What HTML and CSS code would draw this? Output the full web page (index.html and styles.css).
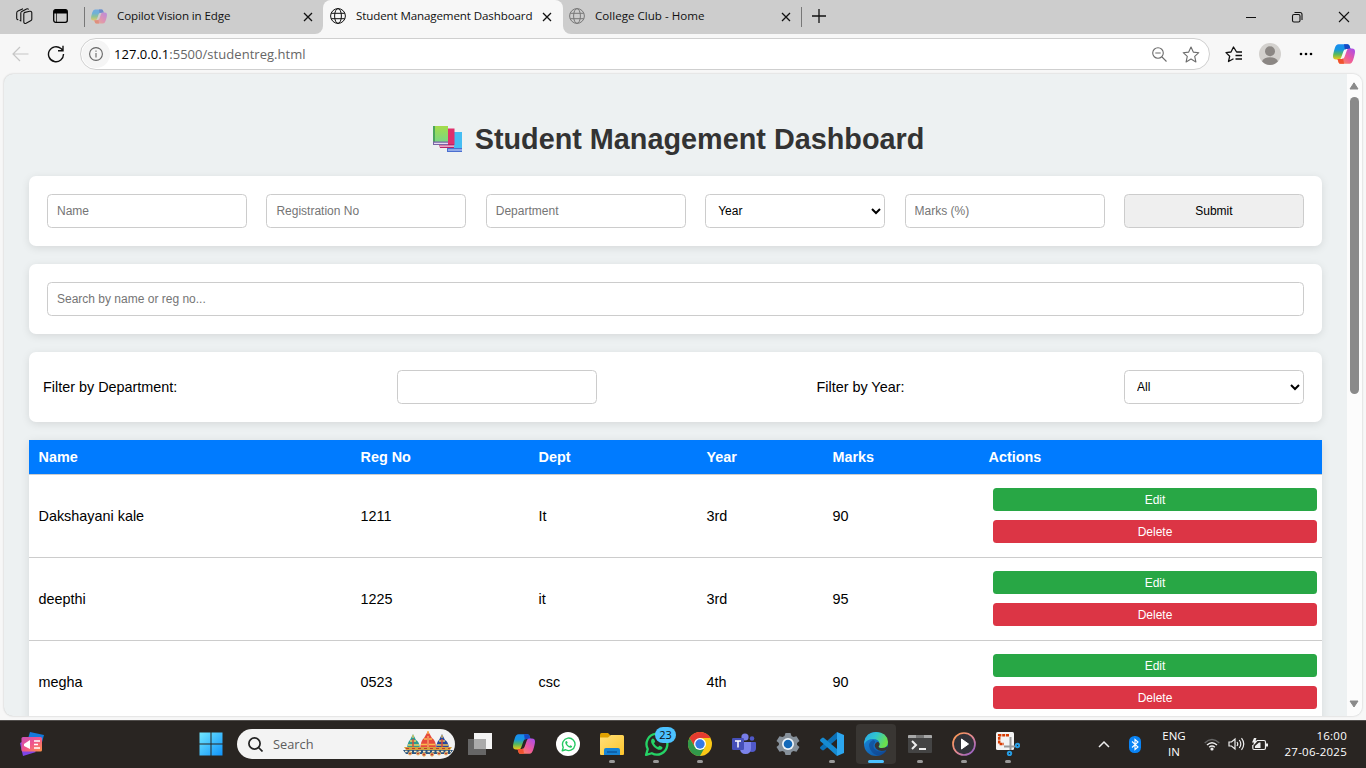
FILE: index.html
```html
<!DOCTYPE html>
<html lang="en">
<head>
<meta charset="utf-8">
<title>Student Management Dashboard</title>
<link rel="stylesheet" href="styles.css">
</head>
<body>
<svg class="defs" width="0" height="0" aria-hidden="true">
  <defs>
    <linearGradient id="cpA" x1="0" y1="0" x2="0" y2="1"><stop offset="0" stop-color="#1b8df2"/><stop offset=".35" stop-color="#1597e0"/><stop offset=".65" stop-color="#57b95b"/><stop offset="1" stop-color="#f4c916"/></linearGradient>
    <linearGradient id="cpB" x1="1" y1="0" x2="0" y2="1"><stop offset="0" stop-color="#a44bf0"/><stop offset=".5" stop-color="#ee5a9c"/><stop offset="1" stop-color="#ff9a4a"/></linearGradient>
    <linearGradient id="win" x1="0" y1="0" x2="1" y2="1"><stop offset="0" stop-color="#72e8ff"/><stop offset="1" stop-color="#0f93fb"/></linearGradient>
    <linearGradient id="fold" x1="0" y1="0" x2="1" y2="1"><stop offset="0" stop-color="#ffe07a"/><stop offset="1" stop-color="#fdc52c"/></linearGradient>
    <linearGradient id="edA" x1="0" y1="0" x2="1" y2=".4"><stop offset="0" stop-color="#2ba5e8"/><stop offset=".5" stop-color="#30c5d0"/><stop offset="1" stop-color="#6be04c"/></linearGradient>
    <linearGradient id="edB" x1="0" y1="0" x2="1" y2="1"><stop offset="0" stop-color="#1a8de0"/><stop offset="1" stop-color="#0c4d9c"/></linearGradient>
    <linearGradient id="ring" x1="0" y1="0" x2="1" y2="1"><stop offset="0" stop-color="#ff9a4a"/><stop offset=".5" stop-color="#e58a90"/><stop offset="1" stop-color="#8858d0"/></linearGradient>
    <linearGradient id="book" x1="0" y1="0" x2="0" y2="1"><stop offset="0" stop-color="#a4dc4a"/><stop offset="1" stop-color="#74d58b"/></linearGradient>
    <linearGradient id="news" x1="0" y1="0" x2="1" y2="1"><stop offset="0" stop-color="#c850b8"/><stop offset=".5" stop-color="#f0568a"/><stop offset="1" stop-color="#ff9348"/></linearGradient>
    <symbol id="copilot" viewBox="0 0 22 20">
      <path d="M5.500.3h9q1.500 0 2 1.500l1 3.200h-4.300q-2 0-2.700 2L8.200 13.500q-.7 2-2.200 2H3q-3 0-3-3Q0 10 1.700 4.500 3 .3 5.500.3z" fill="url(#cpA)"/>
      <path d="M11 .3h3.500q1.500 0 2 1.500l1 3.200h-4.300q-.8 0-1.400.4z" fill="#1749c4"/>
      <path d="M16.500 19.700h-9q-1.500 0-2-1.500l-1-3.200h4.300q2 0 2.700-2L13.800 6.500q.7-2 2.200-2h3q3 0 3 3 0 2.500-1.700 8-1.300 4.200-3.800 4.200z" fill="url(#cpB)"/>
      <path d="M4.500 15h4.300q.8 0 1.400-.4l.8 5.100H7.500q-1.500 0-2-1.500z" fill="#f0522f"/>
    </symbol>
    <symbol id="globe" viewBox="0 0 16 16"><g fill="none" stroke="currentColor"><circle cx="8" cy="8" r="7.400"/><ellipse cx="8" cy="8" rx="3.400" ry="7.400"/><path d="M1.200 5.300h13.600M1.200 10.700h13.600"/></g></symbol>
    <symbol id="close" viewBox="0 0 10 10"><path d="M1 1l8 8M9 1L1 9" stroke="currentColor" stroke-width="1.300" fill="none"/></symbol>
    <symbol id="whats" viewBox="0 0 24 24"><path d="M2 22l1.600-5.600A10 10 0 1 1 7.500 20.400z" fill="none" stroke="currentColor" stroke-width="2.200" stroke-linejoin="round"/><path d="M8.500 6.300c-.6 0-1.700.9-1.700 2.500 0 3.400 4.900 8.300 8.300 8.300 1.600 0 2.700-1.200 2.700-2.100 0-.5-2.500-1.900-3-1.700-.5.300-1 1.300-1.400 1.200-1.300-.4-3.400-2.500-3.800-3.700 0-.4 1.100-1 1.100-1.500 0-.5-1-3-2.200-3z" fill="currentColor"/></symbol>
  </defs>
</svg>

<header class="tabstrip">
  <div class="tabs-left">
    <svg class="ic-work" viewBox="0 0 17 16" width="17" height="16" fill="none" stroke="#111" stroke-width="1.100"><path d="M8 4.600l5.700-1.300q1.800-.4 2.100 1.400v6.600q0 1-1.200 1.400l-4.500 2.600q-2 .6-2.300-1.200V6q0-1.100.9-1.500zM4.800 12.700V5q0-1 1-1.600L10.500.9q1.500-.6 2.100.7M5.300 13q-1.200.2-1.400-1M7 .7L2 3Q.7 3.600.7 5v5q0 2 1.600 1.500"/></svg>
    <svg class="ic-vert" viewBox="0 0 15 14" width="15" height="14"><rect x=".7" y=".7" width="13.600" height="12.600" rx="2" fill="none" stroke="#000" stroke-width="1.300"/><path d="M1 4.500V2q0-1.500 1.500-1.500h10Q14 .5 14 2v2.500z"/><path d="M3.500 4v9" stroke="#000" stroke-width=".7"/></svg>
    <i class="sep"></i>
    <svg class="fav faded" width="16" height="15"><use href="#copilot"/></svg>
    <span class="tab-title t1">Copilot Vision in Edge</span>
    <svg class="x" width="10" height="10"><use href="#close"/></svg>
  </div>
  <div class="tab-slot"><div class="tab-active">
    <svg class="fav" width="16" height="16"><use href="#globe"/></svg>
    <span class="tab-title t2">Student Management Dashboard</span>
    <svg class="x" width="10" height="10"><use href="#close"/></svg>
  </div></div>
  <div class="tabs-right">
    <svg class="fav dim" width="16" height="16"><use href="#globe"/></svg>
    <span class="tab-title t3">College Club - Home</span>
    <svg class="x" width="10" height="10"><use href="#close"/></svg>
    <i class="sep"></i>
    <svg class="plus" width="14" height="14" viewBox="0 0 14 14"><path d="M7 0v14M0 7h14" stroke="#111" stroke-width="1.300"/></svg>
    <svg class="winctl" width="104" height="12" viewBox="0 0 104 12" fill="none" stroke="#111" stroke-width="1.100"><path d="M0 6.500h10M93 1l10 10M103 1L93 11"/><rect x="46.500" y="3.500" width="7.500" height="7.500" rx="1.500"/><path d="M48.500 1.500H54q2 0 2 2V9"/></svg>
  </div>
</header>

<nav class="toolbar">
  <svg width="17" height="16" viewBox="0 0 17 16" fill="none" stroke="#c6c6c6" stroke-width="1.200"><path d="M16.500 8H1M8 1L1 8l7 7"/></svg>
  <svg class="reload" width="18" height="18" viewBox="0 0 18 18" fill="none" stroke="#111" stroke-width="1.400"><path d="M16.500 9A7.500 7.500 0 1 1 14 3.600l1.700 1.700M16 .8v4.900h-5"/></svg>
  <div class="address">
    <span class="info"><svg width="14" height="14" viewBox="0 0 14 14" fill="none" stroke="#666" stroke-width="1.100"><circle cx="7" cy="7" r="6.400"/><path d="M7 6v4.500M7 3.500v1.200"/></svg></span>
    <span class="url"><b>127.0.0.1</b>:5500/studentreg.html</span>
    <svg class="mag" width="15" height="15" viewBox="0 0 15 15" fill="none" stroke="#6c6c6c" stroke-width="1.100"><circle cx="6" cy="6" r="5.300"/><path d="M10 10l4.500 4.500M3.300 6h5.400"/></svg>
    <svg width="18" height="17" viewBox="0 0 18 17" fill="none" stroke="#6c6c6c" stroke-width="1.100" stroke-linejoin="round"><path d="M9 1l2.300 5.100 5.500.6-4.100 3.700 1.200 5.500L9 13.100l-4.900 2.800 1.200-5.500L1.200 6.700l5.500-.6z"/></svg>
  </div>
  <svg class="favs" width="18" height="17" viewBox="0 0 18 17" fill="none" stroke="#111" stroke-width="1.300" stroke-linejoin="round"><path d="M15 6h-3.400L8.500 1 6 6l-5 .6 3.700 3.600L3.500 15.500l5-2.700M10.500 9.500H17M10.500 13H17M12 6h5"/></svg>
  <svg class="avatar" width="22" height="22" viewBox="0 0 22 22"><circle cx="11" cy="11" r="11" fill="#d3d1ce"/><circle cx="11" cy="8.300" r="5" fill="#8b8784"/><path d="M3 18.300q2-4 8-4t8 4Q16 22 11 22t-8-3.700z" fill="#8b8784"/></svg>
  <svg class="dots" width="14" height="4" viewBox="0 0 14 4"><circle cx="2" cy="2" r="1.300"/><circle cx="7" cy="2" r="1.300"/><circle cx="12" cy="2" r="1.300"/></svg>
  <svg class="cp" width="22" height="20"><use href="#copilot"/></svg>
</nav>

<div class="viewport">
  <main class="page">
    <h1><svg width="30" height="28" viewBox="0 0 30 28"><path d="M16 7h13v19H16z" fill="#45bdf3"/><path d="M14 23h15v4H14z" fill="#4b6fd0"/><path d="M15 24.500h14v1H15z" fill="#d6e6ff"/><path d="M8 3.500h13.500V20H8z" fill="#e0306c"/><path d="M6 19h15v4H7z" fill="#b92468"/><path d="M7 20.500h14v1.200H7z" fill="#f5d3e4"/><path d="M0 1h15v18H0z" fill="url(#book)"/><path d="M0 1h2v16H0z" fill="#4ca55e"/><path d="M0 16.500h15V20H0z" fill="#7765a5"/><path d="M1 17.700h14v1.200H1z" fill="#e7dbf2"/></svg><span>Student Management Dashboard</span></h1>
    <form class="card">
      <input type="text" placeholder="Name"><input type="text" placeholder="Registration No"><input type="text" placeholder="Department"><select><option>Year</option></select><input type="text" placeholder="Marks (%)"><button type="button" class="submit">Submit</button>
    </form>
    <div class="card"><input class="wide" type="text" placeholder="Search by name or reg no..."></div>
    <div class="card filters"><label>Filter by Department:</label><input type="text"><label>Filter by Year:</label><select><option>All</option></select></div>
    <table>
      <colgroup><col class="c1"><col class="c2"><col class="c3"><col class="c4"><col class="c5"><col class="c6"></colgroup>
      <thead><tr><th>Name</th><th>Reg No</th><th>Dept</th><th>Year</th><th>Marks</th><th>Actions</th></tr></thead>
      <tbody>
        <tr><td>Dakshayani kale</td><td>1211</td><td>It</td><td>3rd</td><td>90</td><td class="actions"><button class="edit">Edit</button><button class="delete">Delete</button></td></tr>
        <tr><td>deepthi</td><td>1225</td><td>it</td><td>3rd</td><td>95</td><td class="actions"><button class="edit">Edit</button><button class="delete">Delete</button></td></tr>
        <tr><td>megha</td><td>0523</td><td>csc</td><td>4th</td><td>90</td><td class="actions"><button class="edit">Edit</button><button class="delete">Delete</button></td></tr>
      </tbody>
    </table>
  </main>
  <aside class="scroll">
    <svg width="10" height="8" viewBox="0 0 10 8"><path d="M5 .8L9 7H1z" fill="#8a8a8a" stroke="#8a8a8a" stroke-linejoin="round"/></svg>
    <i class="thumb"></i>
    <svg class="down" width="10" height="8" viewBox="0 0 10 8"><path d="M5 7L9 1H1z" fill="#8a8a8a" stroke="#8a8a8a" stroke-linejoin="round"/></svg>
  </aside>
</div>

<footer class="taskbar">
  <svg class="widget" width="24" height="25" viewBox="0 0 24 25"><path d="M10 0l14 3-3 11L7 10z" fill="#1379dc"/><path d="M0 11l4-2 12 11-13 4z" fill="#7f45e8"/><rect x="1.500" y="5" width="20.500" height="14.500" rx="1.500" fill="url(#news)"/><path d="M4 12l6-4v9l-6-3z" fill="#fff"/><path d="M14 9h6M14 12.500h4M14 16h6" stroke="#fff" stroke-width="1.300"/></svg>
  <svg class="start" width="24" height="24" viewBox="0 0 24 24"><path d="M.5.500h11v11H.5zM12.500.500h11v11h-11zM.5 12.500h11v11H.5zM12.500 12.500h11v11h-11z" fill="url(#win)"/></svg>
  <div class="search">
    <svg width="15" height="15" viewBox="0 0 15 15" fill="none" stroke="#222" stroke-width="1.700"><circle cx="6.500" cy="6.500" r="5.600"/><path d="M10.500 10.500l4 4"/></svg>
    <span>Search</span>
    <svg class="chariots" width="50" height="26" viewBox="0 0 50 26">
      <path d="M4 17q1-7 3-8l3-6 3 6q3 1 4 8z" fill="#2d9c91"/><path d="M10 4v3M7 10h6M5 14h11" stroke="#f1cf62" stroke-width="1.300"/><path d="M10 8v8" stroke="#d8483c" stroke-width="1.500"/>
      <path d="M33 17q1-7 3-8l3-6 3 6q3 1 4 8z" fill="#27499c"/><path d="M39 4v3M36 10h6M34 14h11" stroke="#eac15a" stroke-width="1.300"/><path d="M39 8v8" stroke="#d8483c" stroke-width="1.500"/>
      <path d="M17 18q1-9 4-11l4-7 4 7q4 2 4 11z" fill="#e64c3c"/><path d="M25 0v3M21 8h8M18 13.500h14" stroke="#f9ba4d" stroke-width="1.300"/><path d="M25 5v12" stroke="#f28b5c" stroke-width="2"/>
      <path d="M1 16h48l-2 3H3z" fill="#d5a13e"/><path d="M0 19h50l-3 4H3z" fill="#2b557f"/><path d="M2 20.500h46" stroke="#f6e6c0" stroke-width="1.600" stroke-dasharray="2.500 2"/><path d="M3 17.500h44" stroke="#c0392f" stroke-dasharray="3 3"/><g fill="#be3b35" stroke="#e9c06b"><circle cx="7" cy="22.500" r="1.500"/><circle cx="15" cy="22.500" r="1.500"/><circle cx="21" cy="23.500" r="1.700"/><circle cx="29" cy="23.500" r="1.700"/><circle cx="36" cy="22.500" r="1.500"/><circle cx="43" cy="22.500" r="1.500"/></g>
    </svg>
  </div>
  <div class="apps">
    <span><svg width="24" height="24" viewBox="0 0 24 24"><path d="M6 1h18v16H6z" fill="#f3f3f3"/><path d="M0 7h18v16H0z" fill="#666"/><path d="M6 7h12v10H6z" fill="#aaa"/></svg></span>
    <span><svg width="22" height="20"><use href="#copilot"/></svg></span>
    <span><i class="wround"><svg width="15" height="15"><use href="#whats"/></svg></i></span>
    <span class="run"><svg width="24" height="24" viewBox="0 0 24 24"><path d="M0 6V2.500Q0 1 1.500 1H8l3 3v2z" fill="#e0a100"/><path d="M0 5.500h8l3-2.500h11.500Q24 3 24 4.500V22q0 1-1 1H1q-1 0-1-1z" fill="url(#fold)"/><path d="M4 23v-5q0-2 2-2h12q2 0 2 2v5z" fill="#1683d4"/><path d="M7 20h10" stroke="#0b579f" stroke-width="1.500"/></svg></span>
    <span class="run"><svg class="green" width="25" height="25"><use href="#whats"/></svg><b class="badge">23</b></span>
    <span class="run"><svg width="24" height="24" viewBox="0 0 24 24"><circle cx="12" cy="12" r="12" fill="#fbc916"/><path d="M1.600 6A12 12 0 0 1 22.400 6H12L7 15z" fill="#e53b30"/><path d="M1.600 6A12 12 0 0 0 12 24l5-9H7z" fill="#31994a"/><circle cx="12" cy="12" r="6" fill="#fff"/><circle cx="12" cy="12" r="4.700" fill="#3479e5"/></svg></span>
    <span><svg width="24" height="22" viewBox="0 0 24 22"><circle cx="13" cy="4" r="3.600" fill="#777de8"/><circle cx="20" cy="5.500" r="2.300" fill="#5059c9"/><path d="M16 9h7q1 0 1 1v5q0 4-4 4-3 0-4-2z" fill="#5059c9"/><path d="M8 9h11v6q0 6-5.500 6T8 15z" fill="#7b83eb"/><rect y="5" width="12" height="12" rx="1.300" fill="#454fb8"/><path d="M3 8h6M6 8v6.500" stroke="#fff" stroke-width="1.500"/></svg></span>
    <span><svg width="24" height="24" viewBox="0 0 24 24"><path d="M9.500 1h5l1 3 2 1 3-.8L23.500 9l-2.400 2v2l2.400 2-3 4.800-3-.8-2 1-1 3h-5l-1-3-2-1-3 .8L.5 15l2.400-2v-2L.5 9l3-4.800 3 .8 2-1z" fill="#86909a"/><circle cx="12" cy="12" r="6" fill="#edf3f8"/><circle cx="12" cy="12" r="4.300" fill="#1469b9"/></svg></span>
    <span class="run"><svg width="24" height="24" viewBox="0 0 24 24"><path d="M17 0v7L4 18q-1 .8-2 0l-1.500-1.300q-1-1 0-2z" fill="#0b70b7"/><path d="M17 24v-7L4 6q-1-.8-2 0L.5 7.300q-1 1 0 2z" fill="#168bd2"/><path d="M17 0l7 3v18l-7 3z" fill="#2ca6ef"/></svg></span>
    <span class="run current"><svg width="24" height="24" viewBox="0 0 24 24"><circle cx="12" cy="12" r="12" fill="url(#edB)"/><path d="M.3 10Q2 0 12 0q11 0 12 10 0 6-6 6-3.500 0-3.500-1.500 1.200-1 1-3Q15 7 9 7 3 7 .3 12z" fill="url(#edA)"/><path d="M9 8q-6 3-3 9 3 6 9 6.500 5-.8 7.500-5-8 3-12-1.500-2.500-3.500.5-6.500.5-2-2-2.500z" fill="#123f88" fill-opacity=".55"/><path d="M15.500 11.500q.2 2-1 3 0 1.500 3.500 1.500 3 0 5-1.500l.8 1-1.300 2.500q-7 2.500-10.500-1.500-2.500-3.500 0-5.500 2-2 3.500.5z" fill="#393633"/></svg></span>
    <span class="run"><svg width="24" height="24" viewBox="0 0 24 24"><rect y="3" width="24" height="18" rx="1" fill="#444"/><path d="M0 6V4q0-1 1-1h22q1 0 1 1v2z" fill="#a8a8a8"/><path d="M8 3h8v3H8z" fill="#777"/><path d="M4 9l4 4-4 4M11 17h7" stroke="#eee" stroke-width="2" fill="none"/></svg></span>
    <span class="run"><svg width="24" height="24" viewBox="0 0 24 24"><circle cx="12" cy="12" r="11" fill="#313238" stroke="url(#ring)" stroke-width="1.700"/><path d="M9.500 7l7 5-7 5z" fill="#fff" stroke="#fff" stroke-linejoin="round"/></svg></span>
    <span class="run"><svg width="24" height="24" viewBox="0 0 24 24"><rect width="18" height="18" rx="1.500" fill="#f3f3f3"/><path d="M13 3.200H3.200V12H8" fill="none" stroke="#d83b01" stroke-width="2.500" stroke-dasharray="3 .8"/><path d="M14.500 5v13M8 14.500h11" stroke="#999" stroke-width="2"/><g fill="none" stroke="#269ce3" stroke-width="2"><circle cx="21.500" cy="13.500" r="1.700"/><circle cx="13.500" cy="21.500" r="1.700"/></g></svg></span>
  </div>
  <div class="tray">
    <svg class="chev" width="12" height="8" viewBox="0 0 12 8"><path d="M1 7l5-5 5 5" fill="none" stroke="#eee" stroke-width="1.500"/></svg>
    <svg class="bt" width="12" height="17" viewBox="0 0 12 17"><rect width="12" height="17" rx="5.500" fill="#0a84f5"/><path d="M3 5.500l6 5.500-3 2.500v-10L9 6l-6 5.500" fill="none" stroke="#fff" stroke-width="1.100"/></svg>
    <div class="lang">ENG<br>IN</div>
    <svg class="wifi" width="16" height="13" viewBox="0 0 16 13" fill="none" stroke="#eee" stroke-width="1.400"><path d="M.7 5Q8-2 15.300 5" stroke="#666"/><path d="M3 7q5-4.600 10 0M5.200 9.300q2.800-2.500 5.600 0"/><circle cx="8" cy="11" r=".9" fill="#eee"/></svg>
    <svg class="snd" width="17" height="14" viewBox="0 0 17 14" fill="none" stroke="#eee" stroke-width="1.200"><path d="M1 5h2.500L7 2v10L3.500 9H1zM9 5q1.500 2 0 4M11.300 3q3 4 0 8M13.500 1.200q4.500 5.800 0 11.600"/></svg>
    <svg class="bat" width="16" height="13" viewBox="0 0 16 13"><path d="M5 2.500h7q1.500 0 1.500 1.500v6q0 1.500-1.500 1.500H2Q.8 11.500.8 10V7" fill="none" stroke="#eee" stroke-width="1.200"/><path d="M3 10V8l4-3.500h1.500V10zM2 0L0 4.500h2L1 8l5-5.500H3.500l1-2.500zM14 5.500h2v3h-2z" fill="#eee"/></svg>
    <div class="clock">16:00<br>27-06-2025</div>
  </div>
</footer>
</body>
</html>
```
FILE: styles.css
```css
* { box-sizing: border-box; }
body { margin: 0; width: 1366px; height: 768px; overflow: hidden; background: #f7f7f7; font-family: "Liberation Sans", Arial, sans-serif; display: flex; flex-direction: column; }
svg { display: block; flex: none; }
.defs { position: absolute; }

.tabstrip { display: flex; height: 34px; flex: none; color: #111; }
.tabs-left, .tabs-right { background: #cdcdcd; display: flex; align-items: center; padding-bottom: 2px; }
.tabs-left { width: 323px; border-radius: 0 0 8px 0; padding-left: 16px; }
.tab-slot { width: 240px; background: #cdcdcd; }
.tab-active { height: 34px; background: #f7f7f7; border-radius: 8px 8px 0 0; display: flex; align-items: center; padding: 0 11px 2px 7px; }
.tabs-right { flex: 1; border-radius: 0 0 0 8px; padding-left: 6px; }
.ic-vert { margin-left: 20px; }
.sep { width: 1px; height: 20px; background: #777; flex: none; }
.tabs-left .sep { margin: 2px 6px 0 16px; }
.faded { opacity: .5; }
.dim { color: #777; }
.tab-title { font: 11.6px "Open Sans", sans-serif; letter-spacing: -.13px; margin: 0 0 2px 10px; white-space: nowrap; flex: 1; }
.tabs-left .x { margin-right: 10px; }
.tabs-right .tab-title { flex: none; width: 186px; letter-spacing: 0; }
.tabs-right .sep { margin: 2px 10px 0 10px; }
.winctl { margin: 1px 16px 0 auto; }
.x { margin-top: 1px; }

.toolbar { height: 40px; flex: none; display: flex; align-items: center; padding-left: 12px; }
.reload { margin-left: 18px; }
.address { margin-left: 15px; width: 1130px; height: 32px; border: 1px solid #cfcfcf; border-radius: 16px; background: #fff; display: flex; align-items: center; padding: 0 9px 0 1px; }
.info { width: 28px; height: 28px; border-radius: 50%; background: #f5f5f5; display: grid; place-items: center; }
.url { flex: 1; margin-left: 4px; font: 13px "Open Sans", sans-serif; color: #666; letter-spacing: .04px; }
.url b { font-weight: 400; color: #000; }
.mag { margin-right: 15px; }
.favs { margin-left: 15px; }
.avatar { margin-left: 16px; }
.dots { margin-left: 18px; }
.cp { margin-left: 20px; }

.viewport { height: 642px; flex: none; margin: 0 4px 4px; border-radius: 9px; overflow: hidden; background: #edf1f2; box-shadow: 0 0 2px #bbb; display: flex; }
.page { flex: none; width: 1343px; padding: 0 25px; font-size: 14.4px; color: #000; }
h1 { margin: 0 -6px 18px 0; padding-top: 46px; height: 84px; font-size: 28.8px; line-height: 38px; color: #333; display: flex; justify-content: center; align-items: center; gap: 12px; }
.card { height: 70px; margin-bottom: 18px; padding: 0 18px; background: #fff; border-radius: 7px; box-shadow: 0 2px 9px rgba(0,0,0,.1); display: flex; align-items: center; justify-content: space-between; }
input, select, .submit { width: 200px; height: 34px; margin: 0; padding: 9px; border: 1px solid #ccc; border-radius: 4.5px; font: 12px "Liberation Sans", Arial, sans-serif; background: #fff; color: #000; }
select, .submit { width: 180px; }
select { padding: 0 8px; }
input::placeholder { color: #757575; }
.submit { background: #efefef; padding: 0; }
.wide { width: 100%; }
.filters { padding-left: 14px; }

table { width: 1293px; table-layout: fixed; border-collapse: collapse; background: #fff; box-shadow: 0 2px 9px rgba(0,0,0,.1); }
.c1 { width: 322px; }
.c2 { width: 178px; }
.c3 { width: 168px; }
.c4 { width: 126px; }
.c5 { width: 156px; }
.c6 { width: 343px; }
th, td { text-align: left; padding: 0 9px 0 9.5px; border-bottom: 1px solid #ccc; }
th { height: 34px; background: #007bff; color: #fff; }
td { height: 83px; }
td.actions { padding: 0 5px 0 14px; }
.actions button { display: block; width: 100%; height: 23px; border: 0; border-radius: 3.5px; color: #fff; font: 12px "Liberation Sans", Arial, sans-serif; padding: 0; }
.actions .edit { background: #28a745; margin-bottom: 9px; }
.actions .delete { background: #dc3545; }

.scroll { flex: 1; background: #fcfcfc; display: flex; flex-direction: column; align-items: center; padding: 8px 1px 8px 0; }
.thumb { width: 9px; height: 297px; border-radius: 5px; background: #8a8a8a; margin-top: 7px; }
.down { margin-top: auto; }

.taskbar { height: 48px; flex: none; background: #292522; border-top: 1px solid #514e4c; display: flex; align-items: center; color: #fff; padding-bottom: 1px; }
.widget { margin-left: 20px; }
.start { margin-left: 155px; }
.search { width: 218px; height: 30px; margin-left: 14px; border-radius: 15px; background: #f3f3f3; color: #5c5c5c; display: flex; align-items: center; padding-left: 11px; font: 12.8px "Open Sans", sans-serif; }
.search span { margin-left: 10px; flex: 1; }
.chariots { margin-right: 2px; }
.apps { display: flex; margin-left: 3px; }
.apps span { width: 44px; height: 46px; display: grid; place-items: center; position: relative; }
.run::after { content: ""; position: absolute; bottom: 4px; left: 19px; width: 6px; height: 3px; border-radius: 2px; background: #999; }
.current::before { content: ""; position: absolute; inset: 3px 2px; border-radius: 4px; background: #393633; }
.current svg { position: relative; }
.current::after { width: 16px; left: 14px; background: #4cc2ff; }
.wround { width: 24px; height: 24px; border-radius: 50%; background: #fff; color: #25c962; display: grid; place-items: center; }
.green { color: #25d366; }
.badge { position: absolute; left: 21px; top: 6px; width: 21px; height: 16px; border-radius: 8px; background: #4cc2ff; color: #111; font: 11px/16px "Open Sans", sans-serif; text-align: center; }
.tray { flex: 1; display: flex; align-items: center; font: 11.5px/16px "Open Sans", sans-serif; padding-right: 19px; }
.chev { margin-left: 68px; }
.bt { margin-left: 19px; }
.lang { width: 40px; text-align: center; margin-left: 13px; }
.wifi { margin-left: 10px; }
.snd { margin-left: 8px; }
.bat { margin-left: 7px; }
.clock { margin-left: auto; text-align: right; letter-spacing: .25px; }
```
